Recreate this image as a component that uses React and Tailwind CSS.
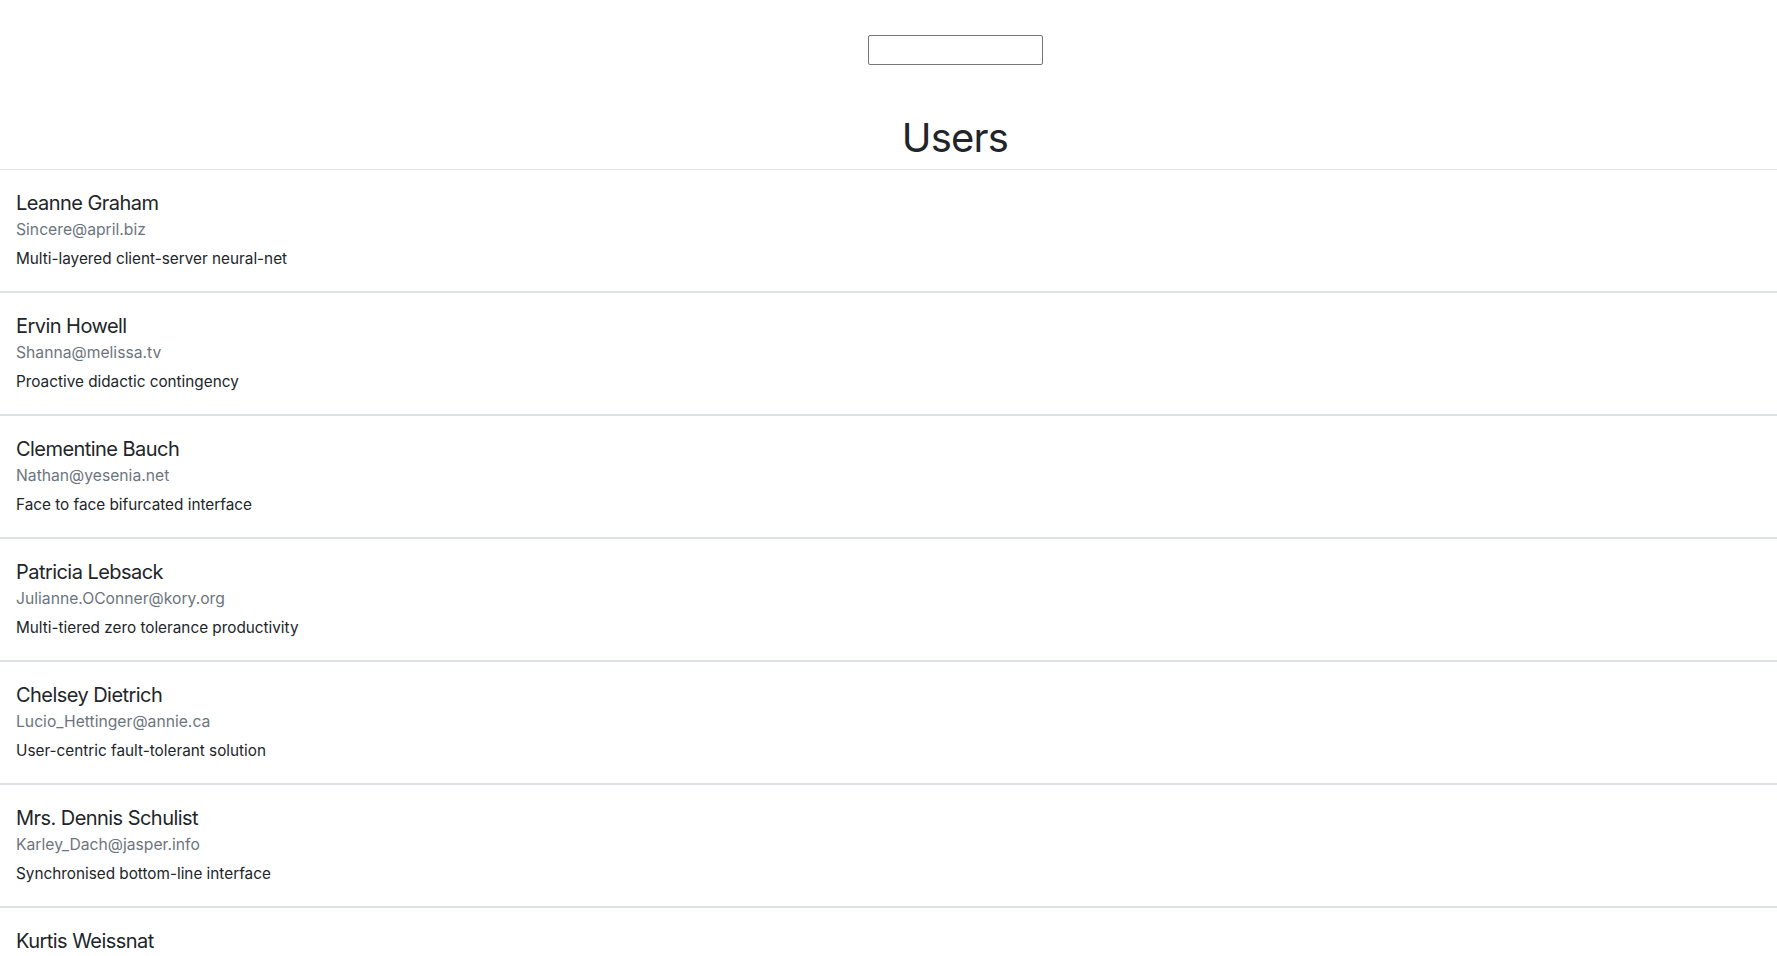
import React, { useState } from "react";

const users = [
  { name: "Leanne Graham", email: "Sincere@april.biz", phrase: "Multi-layered client-server neural-net" },
  { name: "Ervin Howell", email: "Shanna@melissa.tv", phrase: "Proactive didactic contingency" },
  { name: "Clementine Bauch", email: "Nathan@yesenia.net", phrase: "Face to face bifurcated interface" },
  { name: "Patricia Lebsack", email: "Julianne.OConner@kory.org", phrase: "Multi-tiered zero tolerance productivity" },
  { name: "Chelsey Dietrich", email: "Lucio_Hettinger@annie.ca", phrase: "User-centric fault-tolerant solution" },
  { name: "Mrs. Dennis Schulist", email: "Karley_Dach@jasper.info", phrase: "Synchronised bottom-line interface" },
  { name: "Kurtis Weissnat", email: "Telly.Hoeger@billy.biz", phrase: "Configurable multimedia task-force" },
  { name: "Nicholas Runolfsdottir V", email: "Sherwood@rosamond.me", phrase: "Implemented secondary concept" },
  { name: "Glenna Reichert", email: "Chaim_McDermott@dana.io", phrase: "Switchable contextually-based project" },
  { name: "Clementina DuBuque", email: "Rey.Padberg@karina.biz", phrase: "Centralized empowering task-force" },
];

export default function App() {

  const [search, setSearch] = useState("");

  const shown = users.filter((u) =>
    u.name.toLowerCase().includes(search.toLowerCase())
  );

  return (

<div className="min-h-screen bg-white text-[#212529]" style={{ fontFamily: 'Inter, "Liberation Sans", sans-serif' }}>

<div className="flex justify-center pl-[133px] pt-[35px]">

<input

type="text"

value={search}

onChange={(e) => setSearch(e.target.value)}

className="w-[175px] h-[30px] border border-[#767676] rounded-[2px] px-1 text-sm outline-none"

/>

</div>

<h1 className="mt-[49px] mb-[7px] pl-[133px] text-center text-[40px] leading-[48px] font-normal tracking-[-0.8px]">

Users

</h1>

<ul>

{shown.map((u) => (

<li key={u.email} className="border-y border-[#dee2e6] pl-4 pt-[21px] pb-[23px]">

<h5 className="text-[20px] leading-6 font-normal tracking-[-0.55px]">{u.name}</h5>

<p className="mt-[5px] text-[15.7px] leading-[19px] text-[#6c757d]">{u.email}</p>

<p className="mt-[10px] text-[15.3px] leading-[19px]">{u.phrase}</p>

</li>

))}

</ul>

</div>

  );

}
